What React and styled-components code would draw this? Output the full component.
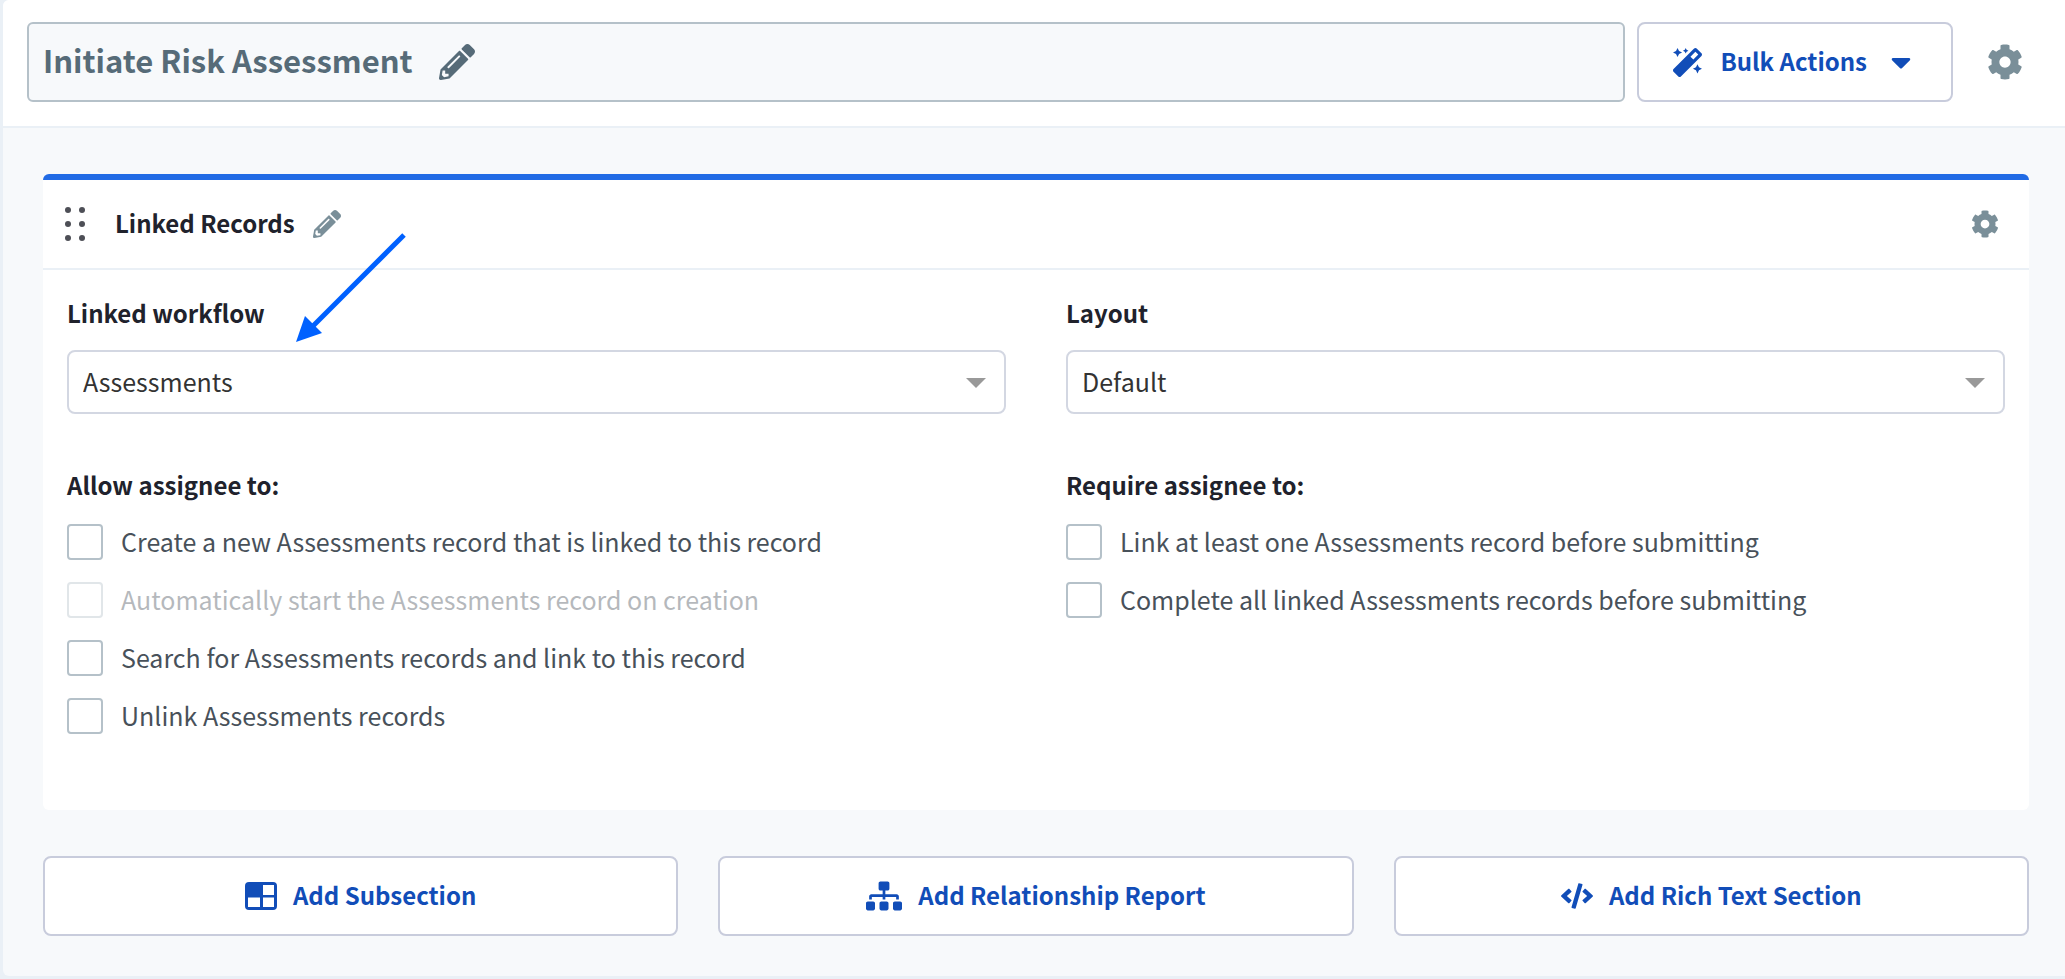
import React from 'react'
import styled, { createGlobalStyle } from 'styled-components'
import { FaPencilAlt, FaMagic, FaCog, FaSitemap, FaCode, FaCaretDown } from 'react-icons/fa'

const allowOptions = [
  { id: 'create', label: 'Create a new Assessments record that is linked to this record' },
  { id: 'auto-start', label: 'Automatically start the Assessments record on creation', disabled: true },
  { id: 'search', label: 'Search for Assessments records and link to this record' },
  { id: 'unlink', label: 'Unlink Assessments records' },
]

const requireOptions = [
  { id: 'link-one', label: 'Link at least one Assessments record before submitting' },
  { id: 'complete-all', label: 'Complete all linked Assessments records before submitting' },
]

function SubsectionIcon() {
  return (
    <svg width="32" height="28" viewBox="0 0 32 28" aria-hidden="true">
      <rect width="32" height="28" rx="4" fill="currentColor" />
      <path d="M18 3h11v10H18zM3 15.5h12V25H3zM18 15.5h11V25H18z" fill="#fff" />
    </svg>
  )
}

function DragDots() {
  return (
    <svg width="20" height="34" viewBox="0 0 20 34" fill="currentColor" aria-hidden="true">
      {[3, 17, 31].map((y) => (
        <React.Fragment key={y}>
          <circle cx="3" cy={y} r="3" />
          <circle cx="17" cy={y} r="3" />
        </React.Fragment>
      ))}
    </svg>
  )
}

function Dropdown({ id, label, value }) {
  return (
    <Field>
      <FieldLabel htmlFor={id}>{label}</FieldLabel>
      <SelectWrap>
        <Select id={id} defaultValue={value}>
          <option>{value}</option>
        </Select>
        <SelectArrow />
      </SelectWrap>
    </Field>
  )
}

function Options({ title, options }) {
  return (
    <Group>
      <Legend>{title}</Legend>
      {options.map((option) => (
        <Option key={option.id} $disabled={option.disabled}>
          <Checkbox type="checkbox" id={option.id} disabled={option.disabled} />
          <OptionLabel htmlFor={option.id}>{option.label}</OptionLabel>
        </Option>
      ))}
    </Group>
  )
}

function App() {
  return (
    <Page>
      <GlobalStyle />
      <Panel>
        <Header>
          <TitleBox>
            <h1>Initiate Risk Assessment</h1>
            <IconButton $color="#566b78" aria-label="Edit title">
              <FaPencilAlt size={36} />
            </IconButton>
          </TitleBox>
          <BulkButton>
            <FaMagic size={29} />
            <ButtonText>Bulk Actions</ButtonText>
            <FaCaretDown size={32} />
          </BulkButton>
          <HeaderGear aria-label="Workflow settings">
            <FaCog size={36} />
          </HeaderGear>
        </Header>

        <Main>
          <Card>
            <CardHeader>
              <DragHandle aria-label="Move section">
                <DragDots />
              </DragHandle>
              <h2>Linked Records</h2>
              <IconButton aria-label="Rename section">
                <FaPencilAlt size={28} />
              </IconButton>
              <CardGear aria-label="Section settings">
                <FaCog size={28} />
              </CardGear>
              <Pointer viewBox="0 0 110 110" aria-hidden="true">
                <path d="M108 2L16 94" stroke="#0061ff" strokeWidth="5" />
                <path d="M0 109L9 83L26 100z" fill="#0061ff" />
              </Pointer>
            </CardHeader>
            <CardBody>
              <Dropdown id="linked-workflow" label="Linked workflow" value="Assessments" />
              <Dropdown id="layout" label="Layout" value="Default" />
              <Options title="Allow assignee to:" options={allowOptions} />
              <Options title="Require assignee to:" options={requireOptions} />
            </CardBody>
          </Card>

          <AddRow>
            <AddButton>
              <SubsectionIcon />
              <ButtonText>Add Subsection</ButtonText>
            </AddButton>
            <AddButton>
              <FaSitemap size={36} />
              <ButtonText>Add Relationship Report</ButtonText>
            </AddButton>
            <AddButton>
              <FaCode size={32} />
              <ButtonText>Add Rich Text Section</ButtonText>
            </AddButton>
          </AddRow>
        </Main>
      </Panel>
    </Page>
  )
}

export default App


const GlobalStyle = createGlobalStyle`
  * {
    box-sizing: border-box;
  }

  body {
    margin: 0;
    background: #eaf0f6;
  }

  body, button, select, input {
    font-family: "Noto Sans CJK SC", "Open Sans", sans-serif;
    font-size: 25px;
    line-height: 34px;
  }

  h1, h2 {
    margin: 0;
  }
`

const Page = styled.div`
  min-height: 100vh;
  display: flex;
  flex-direction: column;
  padding: 0 0 3px 3px;
`

const Panel = styled.div`
  flex: 1;
  border-radius: 6px 0 0 6px;
  background: #f7f9fb;
  overflow: hidden;
`

const Header = styled.header`
  display: flex;
  align-items: center;
  gap: 12px;
  padding: 22px 42px 24px 24px;
  background: white;
  border-bottom: 2px solid #eaf0f6;
`

const TitleBox = styled.div`
  flex: 1;
  height: 80px;
  display: flex;
  align-items: center;
  gap: 26px;
  padding: 0 14px;
  border: 2px solid #b5c1c9;
  border-radius: 6px;
  background: #f7f9fb;
  color: #566b78;

  h1 {
    padding-bottom: 4px;
    font-size: 31px;
    line-height: 40px;
    font-weight: 600;
  }
`

const IconButton = styled.button`
  display: flex;
  padding: 0;
  border: 0;
  background: none;
  color: ${props => props.$color || '#7a8f99'};
  cursor: pointer;
`

const HeaderGear = styled(IconButton)`
  margin-left: 22px;
`

const CardGear = styled(IconButton)`
  margin-left: auto;
`

const OutlineButton = styled.button`
  height: 80px;
  display: flex;
  align-items: center;
  justify-content: center;
  gap: 16px;
  border: 2px solid #c8ccdc;
  border-radius: 8px;
  background: white;
  color: #114db8;
  font-size: 24px;
  font-weight: 600;
  cursor: pointer;
`

const ButtonText = styled.span`
  padding-bottom: 2px;
`

const BulkButton = styled(OutlineButton)`
  gap: 18px;
  padding: 0 34px;
`

const Main = styled.main`
  padding: 46px 36px 40px 40px;
`

const Card = styled.section`
  border-top: 6px solid #216be5;
  border-radius: 6px;
  background: white;
`

const CardHeader = styled.div`
  position: relative;
  height: 90px;
  display: flex;
  align-items: center;
  padding: 0 30px 0 22px;
  border-bottom: 2px solid #eaf0f6;

  h2 {
    margin: 0 18px 0 30px;
    padding-bottom: 2px;
    color: #20222c;
    font-size: 24px;
    line-height: 34px;
    font-weight: 600;
  }
`

const DragHandle = styled(IconButton)`
  color: #4d4f56;
  cursor: grab;
`

/* callout arrow lying over the header and the first field */
const Pointer = styled.svg`
  position: absolute;
  top: 53px;
  left: 253px;
  width: 110px;
  height: 110px;
  pointer-events: none;
`

const CardBody = styled.div`
  display: grid;
  grid-template-columns: 1fr 1fr;
  column-gap: 60px;
  row-gap: 54px;
  padding: 26px 24px 54px;
`

const Field = styled.div`
  display: flex;
  flex-direction: column;
  gap: 20px;
`

const FieldLabel = styled.label`
  color: #20222c;
  font-size: 24px;
  font-weight: 600;
`

const SelectWrap = styled.div`
  position: relative;
`

const Select = styled.select`
  width: 100%;
  height: 64px;
  padding: 0 14px 2px;
  appearance: none;
  border: 2px solid #d3d7e2;
  border-radius: 8px;
  background: white;
  color: #333;
`

const SelectArrow = styled.span`
  position: absolute;
  top: 28px;
  right: 20px;
  border: 10px solid transparent;
  border-top-color: #999;
  border-bottom: 0;
  pointer-events: none;
`

const Group = styled.fieldset`
  min-width: 0;
  margin: 0;
  padding: 0;
  border: 0;
`

const Legend = styled.legend`
  margin-bottom: 22px;
  padding: 0;
  color: #20222c;
  font-size: 24px;
  font-weight: 600;
`

const Option = styled.div`
  display: flex;
  align-items: center;
  gap: 18px;
  margin-bottom: 22px;
  color: #48515a;
  opacity: ${props => (props.$disabled ? 0.4 : 1)};
`

const OptionLabel = styled.label`
  padding-bottom: 2px;
`

const Checkbox = styled.input`
  width: 36px;
  height: 36px;
  margin: 0;
  appearance: none;
  border: 2px solid #b5c1c9;
  border-radius: 4px;
  background: white;
`

const AddRow = styled.div`
  display: grid;
  grid-template-columns: repeat(3, 1fr);
  gap: 40px;
  margin-top: 46px;
`

const AddButton = styled(OutlineButton)`
  width: 100%;
`
